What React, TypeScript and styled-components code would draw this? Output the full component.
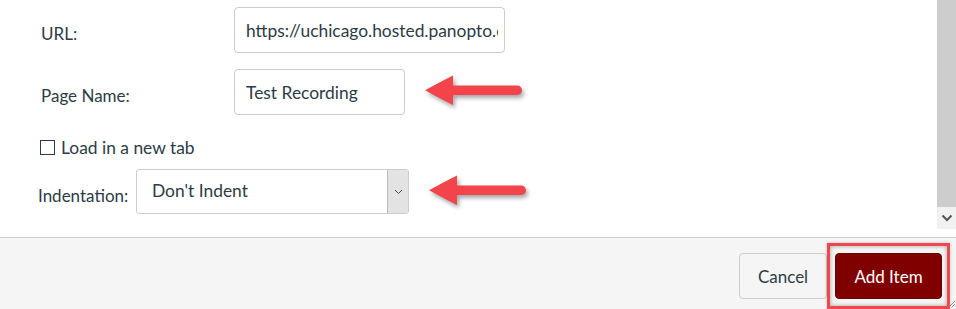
import React from "react";
import styled, { createGlobalStyle } from "styled-components";

const GlobalStyle = createGlobalStyle`
    html, body {
        margin: 0;
        padding: 0;
        width: 956px;
        height: 309px;
        overflow: hidden;
        background: #ffffff;
    }
    body {
        font-family: Lato, "Open Sans", "Liberation Sans", sans-serif;
        color: #2d3b45;
        font-size: 17px;
    }
`;

const ArrowPointer: React.FC = () => (
    <ArrowSvg width="104" height="36" viewBox="0 0 104 36">
        <rect x="24" y="11.5" width="74" height="9.5" rx="4.75" fill="#f2444a" />
        <path d="M1 16.3 Q14 9 29 1.5 L29 31 Q14 23.5 1 16.3 Z" fill="#f2444a" />
    </ArrowSvg>
);

const App: React.FC = () => {
    return (
        <Dialog>
            <GlobalStyle />
            <Body>
                <Content>
                    <Row $top={7} $height={46}>
                        <Label>URL:</Label>
                        <TextInput
                            $width={271}
                            readOnly
                            value="https://uchicago.hosted.panopto.com/Panopto/Pages/Viewer.aspx?id=4f1c"
                        />
                    </Row>
                    <Row $top={16} $height={46}>
                        <Label>Page Name:</Label>
                        <TextInput $width={171} readOnly value="Test Recording" />
                        <ArrowPointer />
                    </Row>
                    <Row $top={25} $height={15}>
                        <CheckBox />
                        <CheckLabel>Load in a new tab</CheckLabel>
                    </Row>
                    <Row $top={14} $height={45}>
                        <InlineLabel>Indentation:</InlineLabel>
                        <Select>
                            <SelectValue>Don't Indent</SelectValue>
                            <SelectButton>
                                <svg width="9" height="6" viewBox="0 0 9 6">
                                    <path d="M1 1 L4.5 4.5 L8 1" fill="none" stroke="#4a4a4a" strokeWidth="1" />
                                </svg>
                            </SelectButton>
                        </Select>
                        <ArrowPointer />
                    </Row>
                </Content>
                <Scrollbar>
                    <ScrollThumb />
                    <ScrollButton>
                        <svg width="12" height="8" viewBox="0 0 12 8">
                            <path d="M1.5 1.5 L6 6 L10.5 1.5" fill="none" stroke="#555" strokeWidth="2" />
                        </svg>
                    </ScrollButton>
                </Scrollbar>
            </Body>
            <Footer>
                <CancelButton>Cancel</CancelButton>
                <Highlight>
                    <PrimaryButton>Add Item</PrimaryButton>
                </Highlight>
                <ResizeGrip width="8" height="8" viewBox="0 0 8 8">
                    <path d="M7 1 L1 7 M7 4 L4 7" stroke="#8a8a8a" strokeWidth="1" />
                </ResizeGrip>
            </Footer>
        </Dialog>
    );
};

const Dialog = styled.div`
    display: flex;
    flex-direction: column;
    width: 956px;
    height: 309px;
    overflow: hidden;
`;

const Body = styled.div`
    display: flex;
    height: 238px;
`;

const Content = styled.div`
    flex: 1;
    display: flex;
    flex-direction: column;
    padding-left: 38px;
`;

const Row = styled.div<{ $top: number; $height: number }>`
    display: flex;
    align-items: center;
    margin-top: ${({ $top }) => $top}px;
    height: ${({ $height }) => $height}px;
`;

const Label = styled.label`
    box-sizing: border-box;
    width: 196px;
    flex: none;
    padding: 6px 0 0 3px;
    font-size: 17px;
`;

const InlineLabel = styled.label`
    width: 98px;
    flex: none;
    padding-top: 8px;
    font-size: 17px;
`;

const TextInput = styled.input<{ $width: number }>`
    box-sizing: border-box;
    width: ${({ $width }) => $width}px;
    height: 46px;
    padding: 0 6px 0 11px;
    border: 1px solid #c7cdd1;
    border-radius: 4px;
    background: #ffffff;
    font-family: Lato, "Open Sans", "Liberation Sans", sans-serif;
    font-size: 17.4px;
    color: #2d3b45;
    outline: none;
`;

const ArrowSvg = styled.svg`
    flex: none;
    margin-left: 19px;
    filter: drop-shadow(2px 3px 2px rgba(0, 0, 0, 0.35));
`;

const CheckBox = styled.span`
    box-sizing: border-box;
    width: 15px;
    height: 15px;
    margin-left: 2px;
    border: 1px solid #2d3b45;
    background: #ffffff;
`;

const CheckLabel = styled.span`
    margin-left: 6px;
    font-size: 17.4px;
`;

const Select = styled.div`
    box-sizing: border-box;
    display: flex;
    width: 273px;
    height: 45px;
    border: 1px solid #c7cdd1;
    border-radius: 3px;
    overflow: hidden;
    background: #ffffff;
`;

const SelectValue = styled.span`
    flex: 1;
    display: flex;
    align-items: center;
    padding-left: 15px;
    padding-bottom: 2px;
    font-size: 17.4px;
`;

const SelectButton = styled.span`
    display: flex;
    align-items: center;
    justify-content: center;
    width: 20px;
    border-left: 1px solid #b9bcbe;
    background: #e3e3e3;
`;

const Scrollbar = styled.div`
    display: flex;
    flex-direction: column;
    width: 19px;
`;

const ScrollThumb = styled.div`
    height: 207px;
    background: #cdcdcd;
`;

const ScrollButton = styled.div`
    display: flex;
    align-items: center;
    justify-content: center;
    height: 22px;
    background: #f1f1f1;
`;

const Footer = styled.div`
    position: relative;
    display: flex;
    justify-content: flex-end;
    align-items: flex-start;
    flex: 1;
    padding: 5px 6px 0 0;
    border-top: 1px solid #c7cdd1;
    background: #f5f5f5;
`;

const Button = styled.button`
    box-sizing: border-box;
    height: 46px;
    border-radius: 4px;
    font-family: Lato, "Open Sans", "Liberation Sans", sans-serif;
    font-size: 17px;
    cursor: pointer;
`;

const CancelButton = styled(Button)`
    width: 88px;
    margin-top: 10px;
    border: 1px solid #c7cdd1;
    background: #f5f5f5;
    color: #2d3b45;
`;

const Highlight = styled.div`
    display: flex;
    padding: 7px 5px;
    border: 3px solid #f0474c;
    box-shadow: inset 0 0 4px rgba(0, 0, 0, 0.35), 0 0 3px rgba(0, 0, 0, 0.2);
`;

const PrimaryButton = styled(Button)`
    width: 107px;
    border: 1px solid #6e0000;
    background: #800000;
    color: #ffffff;
`;

const ResizeGrip = styled.svg`
    position: absolute;
    right: 0;
    bottom: 1px;
`;

export default App;
